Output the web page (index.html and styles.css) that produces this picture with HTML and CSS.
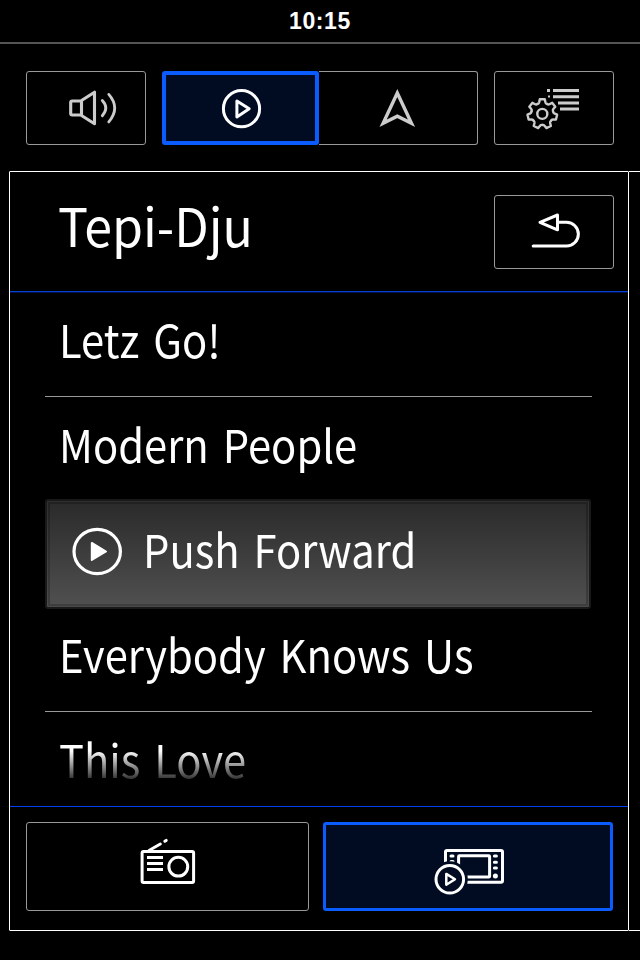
FILE: index.html
```html
<!DOCTYPE html>
<html lang="en">
<head>
<meta charset="utf-8">
<title>Media</title>
<link rel="stylesheet" href="styles.css">
</head>
<body>
<header class="status"><span class="clock">10:15</span></header>
<nav class="modes">
  <button class="btn mode" aria-label="Sound">
    <svg class="icon" width="80" height="56" viewBox="46 80 80 56" stroke-width="3.100">
      <path d="M81.500 101H72.200Q70.700 101 70.700 102.500V113.500Q70.700 115 72.200 115H81.500Z M81.500 100.500L94.500 92.200V123.800L81.500 115.500"/>
      <path stroke-width="2.800" d="M102.300 100.500Q109.300 108 102.300 115.700M108.800 94.400Q120.600 108 108.800 121.900"/>
    </svg>
  </button>
  <div class="group">
    <button class="btn half active" aria-label="Media">
      <svg class="icon white" width="60" height="56" viewBox="211 80 60 56" stroke-width="3">
        <circle cx="241.500" cy="108.700" r="18.100"/>
        <path d="M236.900 101L249.200 108.800L236.900 117Z"/>
      </svg>
    </button>
    <button class="btn half right" aria-label="Navigation">
      <svg class="icon" width="60" height="56" viewBox="368 80 60 56" stroke-width="3.400">
        <path class="sharp" d="M397.300 93L411.500 123.300L397.300 116.200L383.100 123.300Z"/>
      </svg>
    </button>
  </div>
  <button class="btn mode" aria-label="Settings">
    <svg class="icon" width="80" height="56" viewBox="514 80 80 56" stroke-width="2.400">
      <defs><path id="tooth" d="M-4.700 -10Q-3.400 -10.300 -3.100 -11.600L-2.500 -14.600H2.500L3.100 -11.600Q3.400 -10.300 4.700 -10"/></defs>
      <g transform="translate(542.300 113.900)">
        <use href="#tooth"/><use href="#tooth" transform="rotate(51.430)"/><use href="#tooth" transform="rotate(102.860)"/><use href="#tooth" transform="rotate(154.290)"/><use href="#tooth" transform="rotate(205.710)"/><use href="#tooth" transform="rotate(257.140)"/><use href="#tooth" transform="rotate(308.570)"/>
        <circle r="5"/>
      </g>
      <path class="sharp" stroke-width="3" d="M547 90.500H550M553 90.500H579M553 96.700H579M558 102.900H579M560 109H579"/>
      <path class="sharp" stroke-width="2" d="M548 96.500H550"/>
    </svg>
  </button>
</nav>
<div class="pages">
  <main class="panel">
    <div class="head">
      <h1 class="title">Tepi-Dju</h1>
      <button class="btn mode" aria-label="Back">
        <svg class="icon white" width="80" height="56" viewBox="514 204 80 56" stroke-width="3">
          <path d="M540 222.300L557.500 215V229.800ZM558 222.300H566.500A11.850 11.850 0 0 1 566.500 246H533.200"/>
        </svg>
      </button>
    </div>
    <ul class="tracks">
      <li class="track line"><span class="name">Letz Go!</span></li>
      <li class="track"><span class="name">Modern People</span></li>
      <li class="track current">
        <svg class="icon white" width="52" height="52" viewBox="71 525 52 52" stroke-width="3.200">
          <ellipse cx="97.200" cy="551.500" rx="23.200" ry="22.200"/>
          <path fill="#fff" stroke-width="2" d="M91.800 542.900L106 551.500L91.800 560Z"/>
        </svg>
        <span class="name">Push Forward</span>
      </li>
      <li class="track line"><span class="name">Everybody Knows Us</span></li>
      <li class="track last"><span class="name">This Love</span></li>
    </ul>
    <div class="sources">
      <button class="btn radio" aria-label="Radio">
        <svg class="icon white" width="73" height="61" viewBox="131 836 73 61" stroke-width="3">
          <rect x="142.100" y="851.500" width="51.500" height="31" rx="1.500"/>
          <circle cx="178.300" cy="866.700" r="9.400"/>
          <path d="M149 850.500L160.300 844M164.800 841.300L166.200 840.400"/>
          <path class="sharp" d="M147 857.400H163M147 863.500H163M147 869.500H163"/>
        </svg>
      </button>
      <button class="btn device active" aria-label="Device media">
        <svg class="icon white" width="100" height="61" viewBox="418 836 100 61" stroke-width="3">
          <rect x="445.500" y="850.600" width="57" height="31.700" rx="1.500"/>
          <rect x="458.600" y="855.800" width="31" height="21.200" rx=".8"/>
          <path d="M494.400 856.100H496.400M494.400 862.200H496.400M494.400 868H496.400M451 856.100H453M451 861.500H453"/>
          <circle cx="495.400" cy="875.900" r="2.500" fill="#fff" stroke="none"/>
          <circle cx="449.800" cy="879.200" r="18" class="gap"/>
          <circle cx="449.800" cy="879.200" r="13.800"/>
          <path stroke-width="2.500" d="M446.300 873.900L455 879.200L446.300 884.700Z"/>
        </svg>
      </button>
    </div>
  </main>
  <aside class="next"></aside>
</div>
</body>
</html>
```
FILE: styles.css
```css
* { box-sizing: border-box; margin: 0; padding: 0; }
body {
  width: 640px;
  height: 960px;
  overflow: hidden;
  background: #000;
  color: #fff;
  font-family: "Noto Sans CJK JP", "Noto Sans", sans-serif;
}
.status {
  height: 44px;
  border-bottom: 2px solid #555;
  text-align: center;
}
.clock {
  display: block;
  font: bold 23px/42px "Liberation Sans", sans-serif;
  letter-spacing: .6px;
}
.modes {
  display: flex;
  gap: 16px;
  margin: 27px 26px 26px;
}
.btn {
  display: flex;
  align-items: center;
  justify-content: center;
  border: 1px solid #999;
  border-radius: 3px;
  background: #000;
}
.mode { width: 120px; height: 74px; }
.group { display: flex; width: 316px; }
.half { width: 157px; height: 74px; }
.half.active { border-width: 4px; }
.right { width: 159px; border-left: 0; border-radius: 0 3px 3px 0; }
.btn.active { border-color: #0a5cff; background: #010c22; }
.icon {
  display: block;
  flex: none;
  fill: none;
  stroke: #ccc;
  stroke-linecap: round;
  stroke-linejoin: round;
}
.white { stroke: #fff; }
.sharp { stroke-linecap: butt; stroke-linejoin: miter; }
.gap { fill: #010c22; stroke: none; }
.pages { display: flex; height: 760px; padding-left: 9px; }
.panel { width: 620px; border: 1px solid #fff; border-radius: 1px; }
.next { flex: 1; border: solid #fff; border-width: 1px 0; }
.head {
  display: flex;
  justify-content: space-between;
  height: 120px;
  padding: 23px 14px 0 48px;
  border-bottom: 1px solid #0341cf;
  box-shadow: 0 1px #001250;
}
.title {
  font-size: 53px;
  font-weight: 400;
  line-height: 58px;
  white-space: nowrap;
  transform: scaleX(.945);
  transform-origin: left;
}
.tracks { height: 514px; list-style: none; padding: 0 36px 0 35px; }
.track {
  display: flex;
  align-items: center;
  height: 105px;
  padding-left: 13.5px;
  font-size: 45.5px;
  line-height: 60px;
  white-space: nowrap;
}
.name {
  padding-bottom: 13px;
  word-spacing: 5px;
  transform: scaleX(.917);
  transform-origin: left;
}
.line { border-bottom: 1px solid #999; }
.current {
  height: 110px;
  margin: -3px 1px -2px 0;
  padding-left: 24px;
  border: 2px solid #191919;
  border-radius: 3px;
  background: linear-gradient(#2a2a2a, #505050);
  box-shadow: inset 0 0 0 1px rgba(255, 255, 255, .07), inset 0 0 0 3px rgba(0, 0, 0, .22);
  gap: 20px;
}
.current .icon { margin-bottom: 7px; }
.last { height: 94px; }
.last .name {
  padding-bottom: 3px;
  background: linear-gradient(#fff 36%, #333 81%);
  background-clip: text;
  color: transparent;
}
.sources {
  display: flex;
  gap: 14px;
  padding: 15px 15px 0 16px;
  border-top: 1px solid #0540f0;
}
.radio { width: 283px; height: 89px; }
.device { width: 290px; height: 89px; }
.device.active { border-width: 3px; }
```
